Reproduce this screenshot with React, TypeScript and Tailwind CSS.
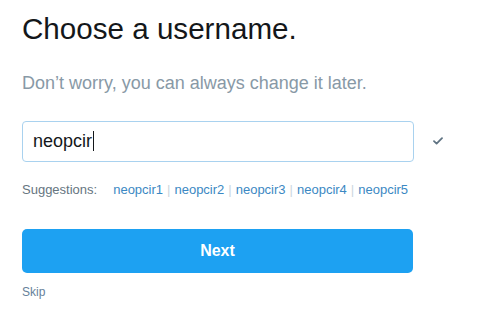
import { useState } from "react";

const sugestoes = ["neopcir1", "neopcir2", "neopcir3", "neopcir4", "neopcir5"];

export default function App() {
  const [nome] = useState("neopcir");

  return (
    <div className="min-h-[335px] w-[478px] bg-white pl-[22px] pt-[14px] font-['Liberation_Sans',Arial,sans-serif]">
      <h1 className="text-[29.6px] leading-none text-[#14171a]">Choose a username.</h1>
      <p className="mt-[30px] text-[18px] leading-none text-[#8899a6]">
        Don’t worry, you can always change it later.
      </p>

      <div className="mt-[29px] flex items-center">
        <div className="flex h-[41px] w-[392px] items-center rounded-[4px] border border-[#a9d2ef] px-[10px] text-[18px] text-[#14171a]">
          <span>{nome}</span>
          <span className="ml-px h-[20px] w-px bg-[#14171a]" />
        </div>
        <svg
          className="ml-[19px]"
          width="10"
          height="8"
          viewBox="0 0 10 8"
          fill="none"
          stroke="#5f7382"
          strokeWidth="1.8"
          strokeLinecap="round"
          strokeLinejoin="round"
        >
          <path d="M1 4.2 L3.6 6.6 L9 1.2" />
        </svg>
      </div>

      <div className="mt-[21px] flex text-[13px] leading-none">
        <span className="text-[#66757f]">Suggestions:</span>
        <div className="ml-[16px] flex">
          {sugestoes.map((s, i) => (
            <span key={s} className="flex">
              {i > 0 && <span className="mx-[4px] text-[#ccd6dd]">|</span>}
              <a className="text-[#3b88c3]">{s}</a>
            </span>
          ))}
        </div>
      </div>

      <button className="mt-[33px] flex h-[44px] w-[391px] items-center justify-center rounded-[5px] bg-[#1da1f2] text-[16px] font-bold text-white">
        Next
      </button>

      <div className="mt-[13px] text-[12px] leading-none text-[#66819a]">Skip</div>
    </div>
  );
}
